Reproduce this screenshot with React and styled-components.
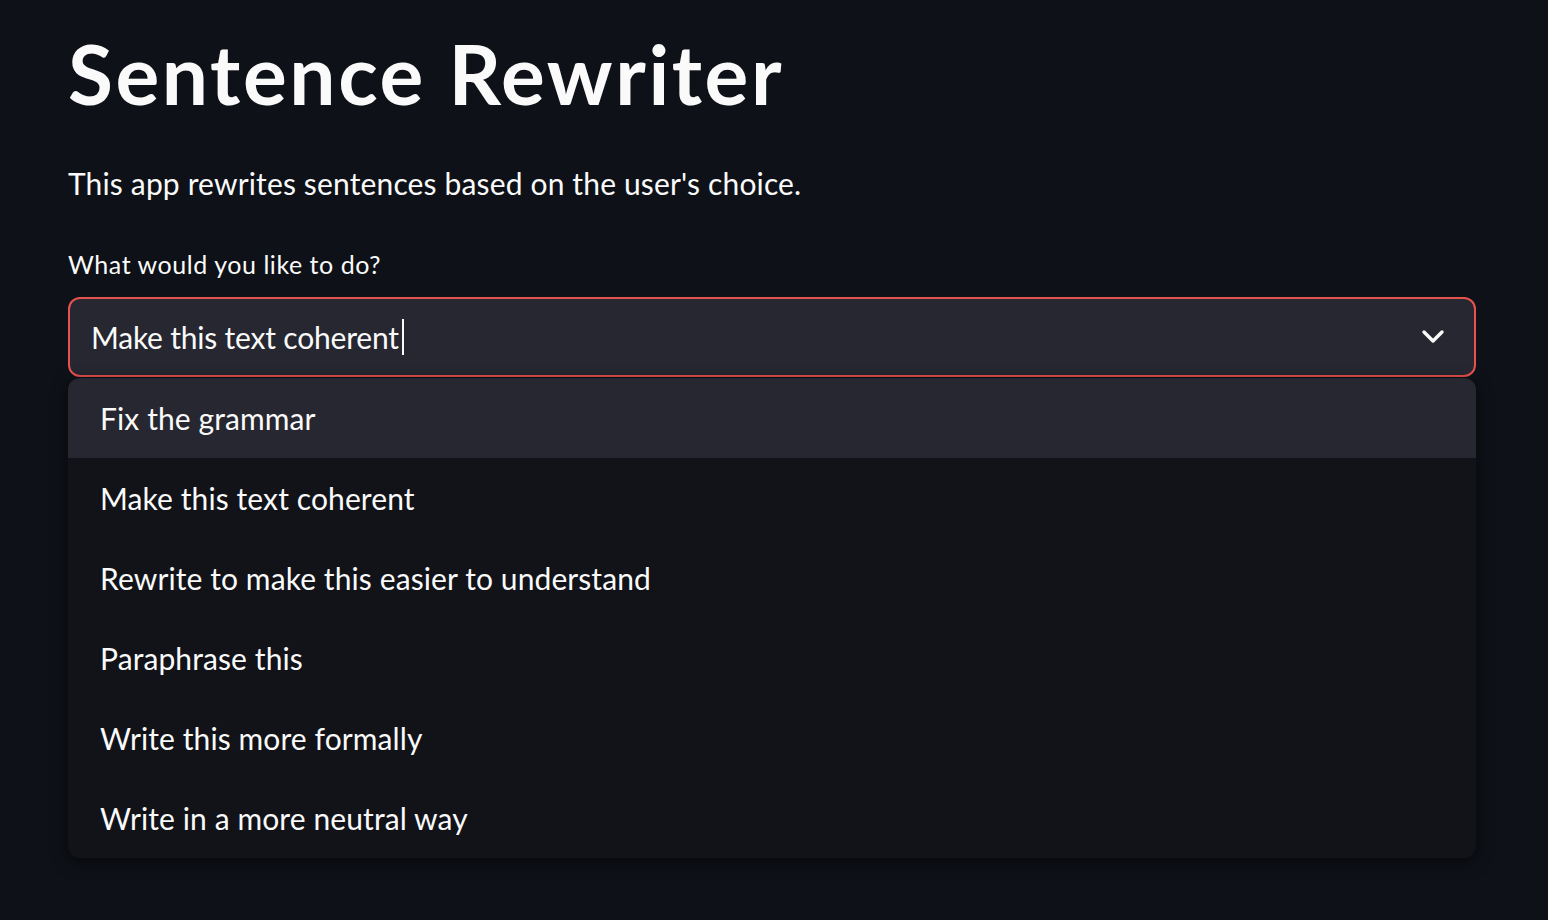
import React from 'react'
import styled, { createGlobalStyle } from 'styled-components'

const GlobalStyle = createGlobalStyle`
  html, body {
    margin: 0;
    padding: 0;
    background: #0e1117;
  }
  body {
    font-family: Lato, "Noto Sans", "Liberation Sans", sans-serif;
    color: #fafafa;
  }
`

const Page = styled.div`
  min-height: 920px;
  background: #0e1117;
  padding: 27px 72px 0 68px;
  box-sizing: border-box;
`

const Title = styled.h1`
  margin: 0;
  font-size: 82px;
  font-weight: 700;
  line-height: 92px;
  letter-spacing: 2.6px;
  color: #fafafa;
`

const Description = styled.p`
  margin: 46px 0 0;
  font-size: 30px;
  line-height: 36px;
  letter-spacing: 0.15px;
`

const Label = styled.label`
  display: block;
  margin-top: 48px;
  font-size: 25px;
  line-height: 30px;
  letter-spacing: 0.55px;
`

const SelectWrap = styled.div`
  margin-top: 18px;
  width: 1408px;
`

const SelectBox = styled.div`
  height: 80px;
  box-sizing: border-box;
  border: 2px solid #e8524e;
  border-radius: 12px;
  background: #262730;
  display: flex;
  align-items: center;
  padding: 0 29px 0 21px;
`

const Value = styled.span`
  font-size: 30px;
  letter-spacing: -0.2px;
`

const Caret = styled.span`
  display: inline-block;
  width: 2px;
  height: 36px;
  margin-left: 3px;
  background: #fafafa;
`

const Chevron = styled.svg`
  margin-left: auto;
`

const Menu = styled.ul`
  list-style: none;
  margin: 1px 0 0;
  padding: 0;
  background: #111319;
  border-radius: 12px;
  box-shadow: 0 4px 16px rgba(0, 0, 0, 0.6);
  overflow: hidden;
`

const Item = styled.li`
  height: 80px;
  display: flex;
  align-items: center;
  padding-left: 32px;
  font-size: 30px;
  letter-spacing: 0.1px;
  background: ${(p) => (p.$active ? '#262730' : 'transparent')};
`

const options = [
  'Fix the grammar',
  'Make this text coherent',
  'Rewrite to make this easier to understand',
  'Paraphrase this',
  'Write this more formally',
  'Write in a more neutral way',
]

export default function App() {
  return (
    <Page>
      <GlobalStyle />
      <Title>Sentence Rewriter</Title>
      <Description>This app rewrites sentences based on the user's choice.</Description>
      <Label>What would you like to do?</Label>
      <SelectWrap>
        <SelectBox>
          <Value>Make this text coherent</Value>
          <Caret />
          <Chevron width="24" height="16" viewBox="0 0 24 16" fill="none">
            <path d="M3 3 L12 12 L21 3" stroke="#fafafa" strokeWidth="3.4" strokeLinecap="round" strokeLinejoin="round" />
          </Chevron>
        </SelectBox>
        <Menu>
          {options.map((o, i) => (
            <Item key={o} $active={i === 0}>{o}</Item>
          ))}
        </Menu>
      </SelectWrap>
    </Page>
  )
}
